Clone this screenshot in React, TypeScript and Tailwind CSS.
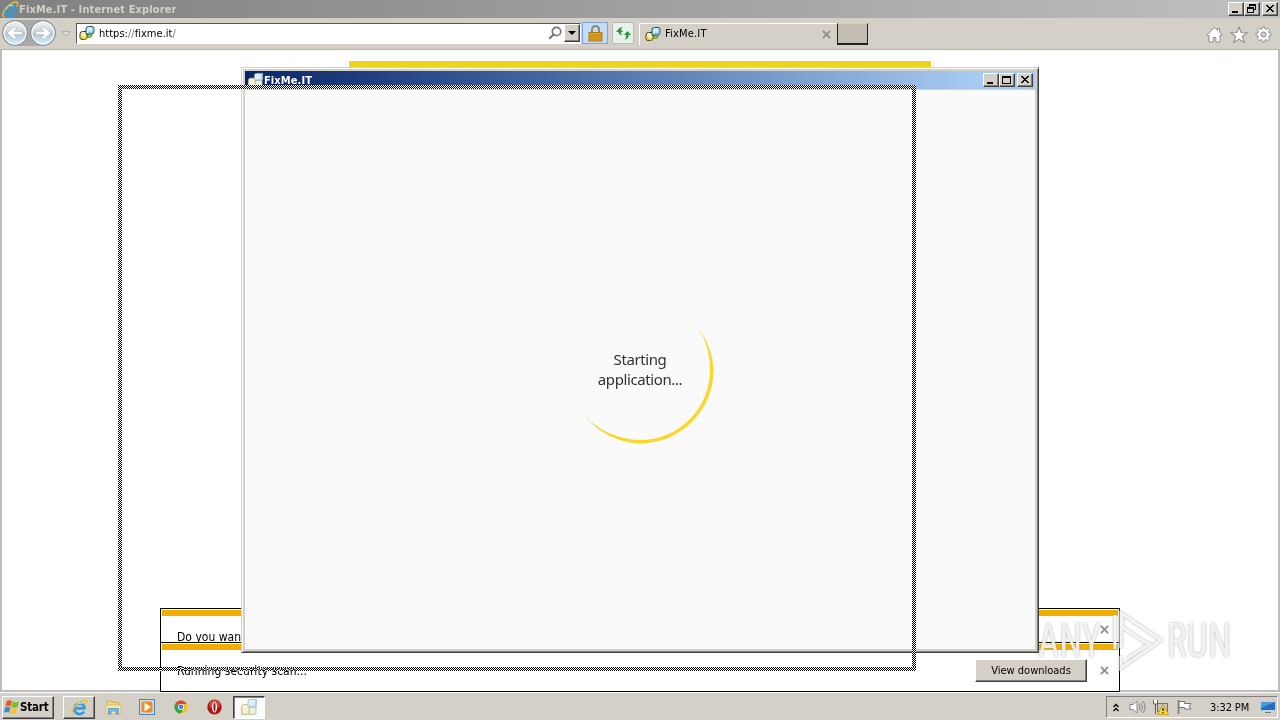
import type { ReactNode } from 'react'
import clsx from 'clsx'

const RAISED = 'bg-[#d4d0c8] border border-t-white border-l-white border-r-[#404040] border-b-[#404040] shadow-[inset_-1px_-1px_0_#808080]'

// ── Icons ─────────────────────────────────────────────────────

function FixMeIcon({ size = 16 }: { size?: number }) {
	return (
		<svg width={size} height={size} viewBox="0 0 16 16" className="shrink-0">
			<path d="M7.500 7.500h5.500v2.500q0 2.500-2.500 2.500H7.500z" fill="#8cc63f" stroke="#5c8a3c" strokeWidth=".8" />
			<path d="M3.500 6.500h4.500v5.500q0 2.500-2.500 2.500H3q-2 0-2-2V9q0-2.500 2.500-2.500z" fill="#fbf0b4" stroke="#3d3b20" />
			<path d="M2.200 10.500q0 3 1.800 3h1.500q1.500 0 1.500-2" fill="none" stroke="#f3c615" strokeWidth="1.600" />
			<path d="M9.500 1.500H13q2 0 2 2v3q0 2.500-2.500 2.500H7V4q0-2.500 2.500-2.500z" fill="#d3ebf4" stroke="#1d4a5c" />
			<path d="M13.800 3V5.500q0 2-1.800 2H9" fill="none" stroke="#7fc4dd" strokeWidth="1.300" />
		</svg>
	)
}

function FixMeLargeIcon({ size = 18 }: { size?: number }) {
	return (
		<svg width={size} height={size} viewBox="0 0 18 18" className="shrink-0">
			<path d="M9 9h7v6q0 1.500-1.500 1.500H9z" fill="#eaf3d8" stroke="#a8bd8c" strokeWidth=".8" />
			<path d="M4 6.500h5V15q0 1.500-1.500 1.500H1.500V9q0-2.500 2.500-2.500z" fill="#f7f3d8" stroke="#bdb78c" strokeWidth=".8" />
			<path d="M2.500 11v4.500H7q1.200 0 1.200-1.500v-3" fill="none" stroke="#efe09a" strokeWidth="1.200" />
			<path d="M10 1.500h6.500v6Q16.500 9 15 9H8V3.500q0-2 2-2z" fill="#e0f0f7" stroke="#9cb8c2" strokeWidth=".8" />
			<path d="M15.500 2.500V7q0 1-1 1H9" fill="none" stroke="#a9d3e2" strokeWidth="1.200" />
		</svg>
	)
}

function IeIcon({ size = 16 }: { size?: number }) {
	return (
		<svg width={size} height={size} viewBox="0 0 16 16" className="shrink-0">
			<path d="M13.800 8.900H4.900M13 8.900A4.900 4.900 0 1 0 12.300 11.900" fill="none" stroke="#2f9be0" strokeWidth="2.600" />
			<path d="M4.300 7.600A4.200 4.200 0 0 1 10.500 4.700" fill="none" stroke="#a5def9" strokeWidth="1.100" />
			<path d="M2.300 14.800C-.5 14.500.8 10 4.500 6 8.500 1.800 13.500-.3 14.600 1.800c.5 1-.1 2.300-.8 3.400" fill="none" stroke="#f2c230" strokeWidth="1.300" />
		</svg>
	)
}

function WindowsFlag() {
	return (
		<svg width="17" height="17" viewBox="0 0 17 16" className="shrink-0">
			<path d="M3.700 1.500q2.700-1.500 5.300 0L7.600 6.900q-2.700-1.500-5.300 0z" fill="#ea5a24" />
			<path d="M9.700 2q3 1.500 6.300 0l-1.500 5.400q-3 1.500-6.200 0z" fill="#7ebb32" />
			<path d="M2.100 7.900q2.700-1.500 5.300 0L6 13.200q-2.700-1.500-5.300 0z" fill="#3b8ad8" />
			<path d="M8.100 8.400q3 1.500 6.200 0l-1.500 5.400q-3 1.500-6.100 0z" fill="#f8c629" />
		</svg>
	)
}

function NavArrow({ flip = false }: { flip?: boolean }) {
	return (
		<svg width="26" height="26" viewBox="0 0 26 26" className="shrink-0">
			<defs>
				<linearGradient id="navFill" x1="0" y1="0" x2="0" y2="1">
					<stop offset="0" stopColor="#f5f6f7" />
					<stop offset=".48" stopColor="#ccd3da" />
					<stop offset=".5" stopColor="#b4c3d0" />
					<stop offset="1" stopColor="#d8f5ff" />
				</linearGradient>
			</defs>
			<circle cx="13" cy="13" r="12.300" fill="url(#navFill)" stroke="#7c8794" />
			<circle cx="13" cy="13" r="11" fill="none" stroke="#f4f8fb" strokeWidth="1.200" />
			<g transform={flip ? 'translate(26 0) scale(-1 1)' : undefined}>
				<path d="M20.500 11.300h-8.500l2.800-3-2.600-1.800L5 13l7.200 6.500 2.600-1.800-2.800-3h8.500z" fill="#fff" stroke="#a3b1bd" strokeWidth=".7" />
			</g>
		</svg>
	)
}

function Cross({ size = 9, color = '#8c8c8c', className }: { size?: number; color?: string; className?: string }) {
	return (
		<svg width={size} height={size} viewBox="0 0 8 8" className={clsx('shrink-0', className)}>
			<path d="M.8.8l6.400 6.400M7.200.8L.8 7.200" stroke={color} strokeWidth="1.600" />
		</svg>
	)
}

function ToolIcons() {
	return (
		<div className="flex items-center gap-[7px] pr-2 pt-0.5">
			<svg width="17" height="17" viewBox="0 0 17 17">
				<path d="M8.500 1.500L1 8.700l1 1.300 1-.6V16h4.200v-4.500h2.600V16H14V9.400l1 .6 1-1.300-2.500-2.500V2.500h-2v1.800z" fill="#fff" stroke="#8e8e8e" />
			</svg>
			<svg width="18" height="18" viewBox="0 0 17 17">
				<path d="M8.500 1l2 5.200 5.700.2-4.500 3.500 1.700 5.600-4.900-3.200-4.900 3.200 1.700-5.600L.8 6.400l5.700-.2z" fill="#fff" stroke="#8e8e8e" />
			</svg>
			<svg width="17" height="17" viewBox="0 0 17 17">
				<path
					d="M7.300 1h2.400l.3 1.900 1.200.5 1.600-1.200 1.900 1.900-1.200 1.600.5 1.200 2 .4v2.400l-2 .3-.5 1.200 1.200 1.600-1.900 1.900-1.600-1.200-1.200.5L9.700 16H7.300L7 14l-1.200-.5-1.600 1.200-1.900-1.900 1.200-1.600L3 10 1 9.700V7.300L3 6.900l.5-1.200-1.200-1.600 1.900-1.900 1.600 1.200L7 2.900z"
					fill="#fff"
					stroke="#8e8e8e"
				/>
				<circle cx="8.500" cy="8.500" r="2.600" fill="#d4d0c8" stroke="#8e8e8e" />
			</svg>
		</div>
	)
}

// ── Classic caption buttons ───────────────────────────────────

type Caption = 'min' | 'max' | 'restore' | 'close'

function CaptionButton({ kind, className }: { kind: Caption; className?: string }) {
	return (
		<button type="button" aria-label={kind} className={clsx('flex h-[14px] w-4 items-center justify-center', RAISED, className)}>
			<svg width="12" height="10" viewBox="0 0 12 10" className="shrink-0" fill="none" stroke="#000" shapeRendering="crispEdges">
				{kind === 'min' && <path d="M2 8h6" strokeWidth="2" />}
				{kind === 'max' && <path d="M1.500 1.500h8v7h-8zM1 2.500h9" />}
				{kind === 'restore' && <path d="M3.500 3V.5h6v5H8M3 1.500h7M1.500 4v-.5h6v5h-6zM1 4.500h7" />}
				{kind === 'close' && <path d="M2 1l7 7M3 1l7 7M9 1L2 8M10 1L3 8" />}
			</svg>
		</button>
	)
}

// ── Internet Explorer ─────────────────────────────────────────

function Browser() {
	return (
		<div className="flex h-[692px] flex-col">
			<div className="flex h-[18px] shrink-0 items-center bg-linear-to-r from-[#808080] to-[#c0c0c0] pl-0.5 pr-0.5">
				<IeIcon size={17} />
				<span className="flex-1 pt-0.5 text-[11px] font-bold tracking-[0.12px] text-[#d4d0c8]">FixMe.IT - Internet Explorer</span>
				<CaptionButton kind="min" />
				<CaptionButton kind="restore" />
				<CaptionButton kind="close" className="ml-0.5" />
			</div>

			<div className="flex h-8 shrink-0 items-center border-b border-[#b0b5ac] bg-[#d4d0c8]">
				<div className="-mt-px ml-0.5 flex items-center gap-0.5 rounded-full bg-[#aaa9a6]">
					<NavArrow />
					<NavArrow flip />
				</div>
				<svg width="10" height="6" viewBox="0 0 10 6" className="ml-[5px]">
					<path d="M1 .7h8L5 5z" fill="#e8e5df" stroke="#aaa79f" />
				</svg>
				<div className="-mt-px ml-[5px] flex h-[21px] w-[505px] items-center border border-b-white border-r-white border-l-[#555] border-t-[#555] bg-white pl-0.5">
					<FixMeIcon />
					<span className="ml-1 flex-1 pt-0.5 text-[11px] tracking-[0.02px]">https:<span className="text-[#777]">//</span>fixme.it<span className="text-[#777]">/</span></span>
					<svg width="14" height="14" viewBox="0 0 14 14" fill="none" stroke="#777" className="mr-0.5">
						<circle cx="8.500" cy="5.500" r="4.200" strokeWidth="1.700" />
						<path d="M5.500 8.500L1.300 12.700" strokeWidth="2.200" />
					</svg>
					<div className={clsx('flex h-[18px] w-4 items-center justify-center', RAISED)}>
						<svg width="8" height="4"><path d="M0 0h8L4 4z" /></svg>
					</div>
				</div>
				<div className="-mt-px ml-px flex h-[22px] w-[26px] items-center justify-center border border-[#7ba7de] bg-[#c5dcf8]">
					<svg width="15" height="17" viewBox="0 0 15 17">
						<path d="M4 8V4.500a3.500 3.500 0 0 1 7 0V8" fill="none" stroke="#8f8a70" strokeWidth="2" />
						<rect x="1" y="7.500" width="13" height="8.500" fill="#e5a41c" stroke="#a97a1b" />
						<path d="M1.500 10h12M1.500 12h12M1.500 14h12" stroke="#b98016" strokeWidth=".8" />
					</svg>
				</div>
				<div className="-mt-px ml-1 flex h-[22px] w-[22px] items-center justify-center rounded-[2px] border border-[#b5bbb5] bg-[#e9f0ea]">
					<svg width="15" height="15" viewBox="0 0 15 15" fill="#2d9645">
						<path d="M0 6l3.500-4L7 6H4.800q0 1.800 1.700 3Q2.500 9 2.500 6z" />
						<path d="M3.500 2.500q1-1.500 3-1.500-1.500 1-1.500 4h-2z" />
						<path d="M8 9l3.500-4L15 9h-2.300q.2 4-4.200 4.500 2-1.500 1.700-4.500z" />
					</svg>
				</div>
				<div className="ml-[5px] flex h-[22px] w-[198px] items-center border-l border-t border-white pl-[5px] pr-[6px]">
					<FixMeIcon />
					<span className="ml-1 flex-1 pt-px text-[11px] tracking-[0.18px]">FixMe.IT</span>
					<Cross />
				</div>
				<div className="h-[22px] w-[31px] border border-b-2 border-t-[#d4d0c8] border-l-[#222] border-r-[#222] border-b-[#222] bg-[#c2bcb3]" />
				<div className="flex-1" />
				<ToolIcons />
			</div>

			<div className="flex flex-1 justify-center border-b-2 border-l-2 border-r-2 border-[#bcbcbc] bg-white pt-[11px]">
				<div className="h-[7px] w-[582px] bg-[#ecd51c]" />
			</div>
		</div>
	)
}

interface NotificationProps {
	text: string
	className?: string
	closeClass?: string
	children?: ReactNode
}

function NotificationBar({ text, className, closeClass, children }: NotificationProps) {
	return (
		<div className={clsx('absolute left-[160px] w-[960px] overflow-hidden border border-black bg-white px-px pt-px', className)}>
			<div className="h-[6px] bg-[#f2ae00]" />
			<div className="flex h-[41px] items-center pl-[15px] pr-[9px]">
				<span className="flex-1 text-[12px] tracking-[0.02px]">{text}</span>
				{children}
				<Cross className={closeClass} />
			</div>
		</div>
	)
}

// ── FixMe.IT launcher ─────────────────────────────────────────

function Spinner() {
	return (
		<svg width="150" height="150" viewBox="0 0 150 150" className="absolute left-[320px] top-[205px]">
			<path d="M134 34A73.500 73.500 0 0 1 148.500 75A73.500 73.500 0 0 1 75 148.500A74 74 0 0 1 19 120A77 77 0 0 0 75 145A70 70 0 0 0 145 75A78 78 0 0 0 134 34Z" fill="#fbd72b" />
		</svg>
	)
}

function Launcher() {
	return (
		<div className="absolute left-[241px] top-[67px] flex h-[586px] w-[798px] flex-col border border-b-[#404040] border-l-[#d4d0c8] border-r-[#404040] border-t-[#d4d0c8] bg-[#d4d0c8] p-[3px] shadow-[inset_1px_1px_0_#fff,inset_-1px_-1px_0_#808080]">
			<div className="flex h-[18px] shrink-0 items-center bg-linear-to-r from-[#0a246a] to-[#a6caf0] to-92% pl-0.5 pr-0.5">
				<FixMeLargeIcon size={17} />
				<span className="flex-1 pt-0.5 text-[11px] font-bold tracking-[0.1px] text-white">FixMe.IT</span>
				<CaptionButton kind="min" />
				<CaptionButton kind="max" />
				<CaptionButton kind="close" className="ml-0.5" />
			</div>
			<div className="relative mt-px flex flex-1 items-center justify-center bg-[#fafafa] pb-0.5">
				<Spinner />
				<p className="text-center font-['Noto_Sans',sans-serif] text-[15px] leading-5 tracking-[-0.4px] text-[#333]">
					Starting<br />application...
				</p>
			</div>
		</div>
	)
}

// Outline left behind while a window is being dragged
const CHECKER = 'absolute bg-[repeating-conic-gradient(#fff_0_25%,#000_0_50%)] bg-size-[2px_2px]'

function DragOutline() {
	return (
		<>
			<div className={clsx(CHECKER, 'left-[118px] top-[85px] h-1 w-[798px]')} />
			<div className={clsx(CHECKER, 'left-[118px] top-[667px] h-1 w-[798px] mix-blend-difference')} />
			<div className={clsx(CHECKER, 'left-[118px] top-[89px] h-[578px] w-1')} />
			<div className={clsx(CHECKER, 'left-[912px] top-[89px] h-[578px] w-1')} />
		</>
	)
}

function Watermark() {
	return (
		<div className="absolute left-[1038px] top-[606px] flex h-[70px] w-[200px] items-center justify-between pr-1 font-['Roboto',sans-serif] text-[48px] leading-[48px] text-white/80 drop-shadow-[0_0_1px_#999]">
			<span className="h-[48px] w-[72px] origin-left scale-x-[0.77]">ANY</span>
			<svg width="52" height="66" viewBox="0 0 52 66" fill="none" stroke="#fff" strokeOpacity=".85" strokeWidth="3">
				<path d="M2 7v34" />
				<path d="M8 40V5l40 27L8 60V48M9 6v13l29 19M14 51l24-16" />
			</svg>
			<span className="h-[48px] w-[67px] origin-left scale-x-[0.78]">RUN</span>
		</div>
	)
}

// ── Taskbar ───────────────────────────────────────────────────

function Taskbar() {
	return (
		<div className="flex h-7 items-center border-t border-white bg-[#d4d0c8] pl-0.5 pr-0.5 pt-px">
			<button type="button" className={clsx('flex h-[23px] w-[52px] items-center', RAISED)}>
				<WindowsFlag />
				<span className="pt-px text-[11.500px] font-bold tracking-[-0.2px]">Start</span>
			</button>
			<div className={clsx('ml-[9px] flex h-[23px] w-8 items-center justify-center', RAISED)}>
				<IeIcon size={17} />
			</div>
			<svg width="17" height="17" viewBox="0 0 17 17" className="ml-[10px]">
				<path d="M2 2h5l1 1.500h6V10H2z" fill="#eed782" stroke="#cfad52" />
				<path d="M1 6h15v9H1z" fill="#f8e9a8" stroke="#d9bd69" />
				<path d="M3.500 15V9.500h10V15H11v-3H6v3z" fill="#77bde5" stroke="#5aa0cc" />
			</svg>
			<svg width="16" height="16" viewBox="0 0 16 16" className="ml-[17px]">
				<rect x=".5" y=".5" width="15" height="15" fill="#c5def0" stroke="#4689b9" />
				<rect x="2.500" y="2.500" width="11" height="11" rx="2" fill="#f58a1f" />
				<path d="M5.500 3.800v8.400L12 8z" fill="#fff" />
			</svg>
			<svg width="14" height="14" viewBox="0 0 14 14" className="ml-[19px]">
				<circle cx="7" cy="7" r="6.500" fill="#f4c20d" />
				<path d="M7 7L1.300 3.700A6.500 6.500 0 0 1 12.700 4H7z" fill="#db4437" />
				<path d="M7 7L1.300 3.700A6.500 6.500 0 0 0 6.500 13.500L9 9z" fill="#2ba24c" />
				<circle cx="7" cy="7" r="3.100" fill="#fff" />
				<circle cx="7" cy="7" r="2.400" fill="#4285f4" />
			</svg>
			<svg width="15" height="16" viewBox="0 0 15 16" className="ml-[19px]">
				<ellipse cx="7.500" cy="8" rx="7.200" ry="7.500" fill="#a91515" />
				<ellipse cx="7.500" cy="5.500" rx="5.500" ry="4.500" fill="#d6453e" />
				<ellipse cx="7.500" cy="8" rx="2.500" ry="5.500" fill="#fff" />
				<ellipse cx="7.500" cy="8" rx="1.100" ry="4.500" fill="#a91515" />
			</svg>
			<div className="ml-[11px] flex h-[23px] w-8 items-center justify-center border border-b-white border-l-[#404040] border-r-white border-t-[#404040] bg-[#fbfbf9] shadow-[inset_1px_1px_0_#808080]">
				<FixMeLargeIcon size={18} />
			</div>
			<div className="flex-1" />
			<div className="flex h-[22px] w-[172px] items-center border border-b-white border-l-[#808080] border-r-white border-t-[#808080] pl-[6px]">
				<svg width="6" height="9" viewBox="0 0 6 9" fill="none" stroke="#000" strokeWidth="1.300">
					<path d="M.5 4L3 1.500 5.500 4M.5 8L3 5.500 5.500 8" />
				</svg>
				<svg width="17" height="16" viewBox="0 0 17 16" fill="none" stroke="#858585" className="ml-[10px]">
					<path d="M1 5.500h3L8 2v12l-4-3.500H1z" fill="#fff" />
					<path d="M10 5q2 3 0 6M12 3.500q3 4.500 0 9M14 2q4 6 0 12" />
				</svg>
				<svg width="17" height="16" viewBox="0 0 17 16" className="ml-[6px]">
					<path d="M5.500 4.500h10v8h-10z" fill="#c6c6bd" stroke="#707070" />
					<path d="M1.500 1v4h4V1M3.500 5v10" fill="#fff" stroke="#606060" />
					<path d="M11 5.500l5.500 10h-11z" fill="#ffd42b" stroke="#bd9200" strokeWidth=".7" />
					<path d="M11 9v3M11 13v1.200" stroke="#222" strokeWidth="1.300" />
				</svg>
				<svg width="17" height="16" viewBox="0 0 17 16" className="ml-[7px]">
					<path d="M2.500 1v14" stroke="#777" strokeWidth="1.500" />
					<path d="M3 2.500h5.500v2H15L13 7l2 3H8.500V8.500H3z" fill="#fff" stroke="#777" />
				</svg>
				<span className="ml-[17px] whitespace-nowrap pt-0.5 text-[11px] tracking-[-0.1px]">3:32 PM</span>
				<svg width="16" height="14" viewBox="0 0 16 14" className="ml-[11px]">
					<rect x=".5" y="1.500" width="15" height="9" fill="#246dbe" stroke="#b6d3e8" />
					<path d="M1 2h14L1 8z" fill="#5399db" />
					<path d="M5 12.500h6" stroke="#777" />
				</svg>
			</div>
		</div>
	)
}

export default function App() {
	return (
		<div className="relative isolate h-[720px] w-[1280px] overflow-hidden bg-white font-['DejaVu_Sans_Condensed','DejaVu_Sans',sans-serif] text-black [font-stretch:condensed]">
			<Browser />
			<Taskbar />
			<NotificationBar text="Do you wan" className="top-[608px] h-[35px]" closeClass="-mt-[14px]" />
			<NotificationBar text="Running security scan..." className="top-[642px] h-[50px]">
				<button type="button" className={clsx('mr-[13px] h-[23px] w-[112px] pt-0.5 text-[11px]', RAISED)}>View downloads</button>
			</NotificationBar>
			<Launcher />
			<DragOutline />
			<Watermark />
		</div>
	)
}
